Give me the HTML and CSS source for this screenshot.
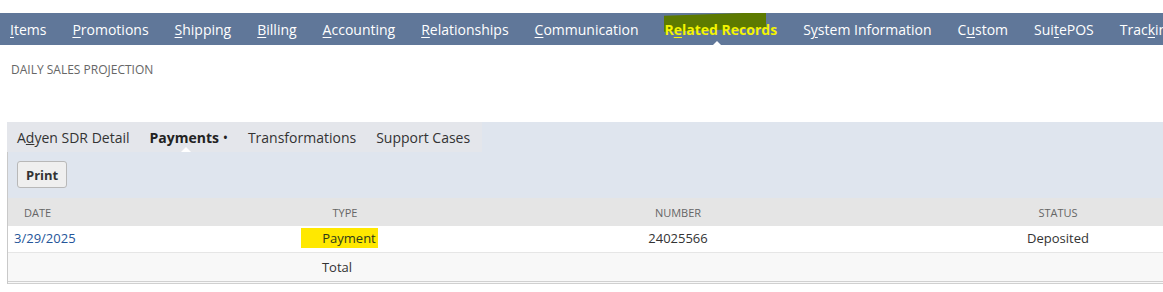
FILE: index.html
```html
<!DOCTYPE html>
<html lang="en">
<head>
  <meta charset="UTF-8" />
  <title>Daily Sales Projection</title>
  <link rel="stylesheet" href="styles.css">
</head>
<body>
  <nav class="subtabs">
    <a class="subtab"><u>I</u>tems</a>
    <a class="subtab"><u>P</u>romotions</a>
    <a class="subtab"><u>S</u>hipping</a>
    <a class="subtab"><u>B</u>illing</a>
    <a class="subtab"><u>A</u>ccounting</a>
    <a class="subtab"><u>R</u>elationships</a>
    <a class="subtab"><u>C</u>ommunication</a>
    <a class="subtab subtab-active"><span class="marker"></span><span class="label">R<u>e</u>lated Records</span></a>
    <a class="subtab">S<u>y</u>stem Information</a>
    <a class="subtab">C<u>u</u>stom</a>
    <a class="subtab">Sui<u>t</u>ePOS</a>
    <a class="subtab">Trac<u>k</u>ing</a>
  </nav>

  <h2 class="section-title">DAILY SALES PROJECTION</h2>

  <div class="sublist">
    <div class="sublist-tabs">
      <div class="tab-group">
        <a class="tab">A<u>d</u>yen SDR Detail</a>
        <a class="tab tab-active">Payments <span class="dot">&bull;</span></a>
        <a class="tab">Transformations</a>
        <a class="tab">Support Cases</a>
      </div>
    </div>
    <div class="sublist-body">
      <div class="toolbar">
        <button class="btn">Print</button>
      </div>
      <table class="grid">
        <colgroup>
          <col class="c-date"><col class="c-type"><col class="c-number"><col class="c-status">
        </colgroup>
        <thead>
          <tr>
            <th class="left">Date</th>
            <th>Type</th>
            <th>Number</th>
            <th>Status</th>
          </tr>
        </thead>
        <tbody>
          <tr class="row">
            <td class="left"><a class="link">3/29/2025</a></td>
            <td><span class="hl">Payment</span></td>
            <td>24025566</td>
            <td>Deposited</td>
          </tr>
          <tr class="total">
            <td></td>
            <td class="total-label">Total</td>
            <td></td>
            <td></td>
          </tr>
        </tbody>
      </table>
    </div>
  </div>
</body>
</html>
```

FILE: styles.css
```css
body {
  margin: 0;
  background: #fff;
  font-family: 'Open Sans', 'Liberation Sans', Arial, sans-serif;
  color: #333;
  overflow: hidden;
  width: 1163px;
}

.subtabs {
  margin-top: 13px;
  height: 32px;
  background: #607799;
  display: flex;
  align-items: center;
  padding-left: 10px;
  gap: 26px;
  white-space: nowrap;
  overflow: hidden;
}

.subtab {
  position: relative;
  color: #fff;
  font-size: 14px;
  line-height: 32px;
  padding-top: 2px;
}

.subtab u { text-underline-offset: 2px; }

.subtab-active .label {
  position: relative;
  font-weight: bold;
  color: #f4f400;
}

.subtab-active .marker {
  position: absolute;
  left: 0;
  top: 2px;
  width: 102px;
  height: 16px;
  background: #5d7a00;
  transform: skewY(-2deg);
}

.subtab-active::after {
  content: '';
  position: absolute;
  left: 48px;
  bottom: 0;
  border: 5px solid transparent;
  border-bottom-color: #fff;
  border-top: 0;
}

.section-title {
  margin: 17px 0 0 11px;
  font-size: 12px;
  font-weight: normal;
  color: #666;
  line-height: 16px;
}

.sublist {
  margin: 44px 0 0 7px;
}

.sublist-tabs {
  background: #dfe5ee;
  height: 30px;
  display: flex;
}

.tab-group {
  display: flex;
  align-items: center;
  background: #e4e6eb;
  padding: 0 12px 0 10px;
  gap: 20px;
}

.tab {
  position: relative;
  font-size: 14px;
  color: #333;
  line-height: 28px;
  padding-top: 2px;
}

.tab-active {
  font-weight: bold;
  color: #222;
}

.tab-active .dot { font-weight: normal; }

.tab-active::after {
  content: '';
  position: absolute;
  left: 31px;
  bottom: 0;
  border: 5px solid transparent;
  border-bottom-color: #fff;
  border-top: 0;
}

.sublist-body {
  background: #dfe5ee;
  border-left: 1px solid #c9c9c9;
}

.toolbar {
  padding: 9px 0 10px 9px;
}

.btn {
  font-family: inherit;
  font-size: 13px;
  font-weight: bold;
  color: #333;
  background: #efefef;
  border: 1px solid #b8b8b8;
  border-radius: 3px;
  height: 27px;
  padding: 0 8px;
}

.grid {
  border-collapse: collapse;
  table-layout: fixed;
  width: 1262px;
  font-size: 13px;
  border-bottom: 3px double #d0d0d0;
}

.c-date { width: 172px; }
.c-type { width: 330px; }
.c-number { width: 336px; }
.c-status { width: 424px; }

.grid th {
  background: #e5e5e5;
  height: 28px;
  padding: 0;
  font-size: 11px;
  font-weight: normal;
  text-transform: uppercase;
  color: #666;
  text-align: center;
}

.grid td {
  padding: 0;
  text-align: center;
  color: #333;
}

.grid .left {
  text-align: left;
  padding-left: 16px;
}

.grid td.left { padding-left: 6px; }

.row td {
  background: #fff;
  height: 24px;
  border-bottom: 1px solid #e6e6e6;
  padding-bottom: 2px;
}

.link { color: #255599; }

.hl {
  background: #ffe800;
  padding: 1px 2px 1px 21px;
  margin-left: -11px;
  color: #2d3a1a;
}

.total td {
  background: #f8f8f8;
  height: 28px;
}

.total-label { padding-right: 16px !important; }
```
